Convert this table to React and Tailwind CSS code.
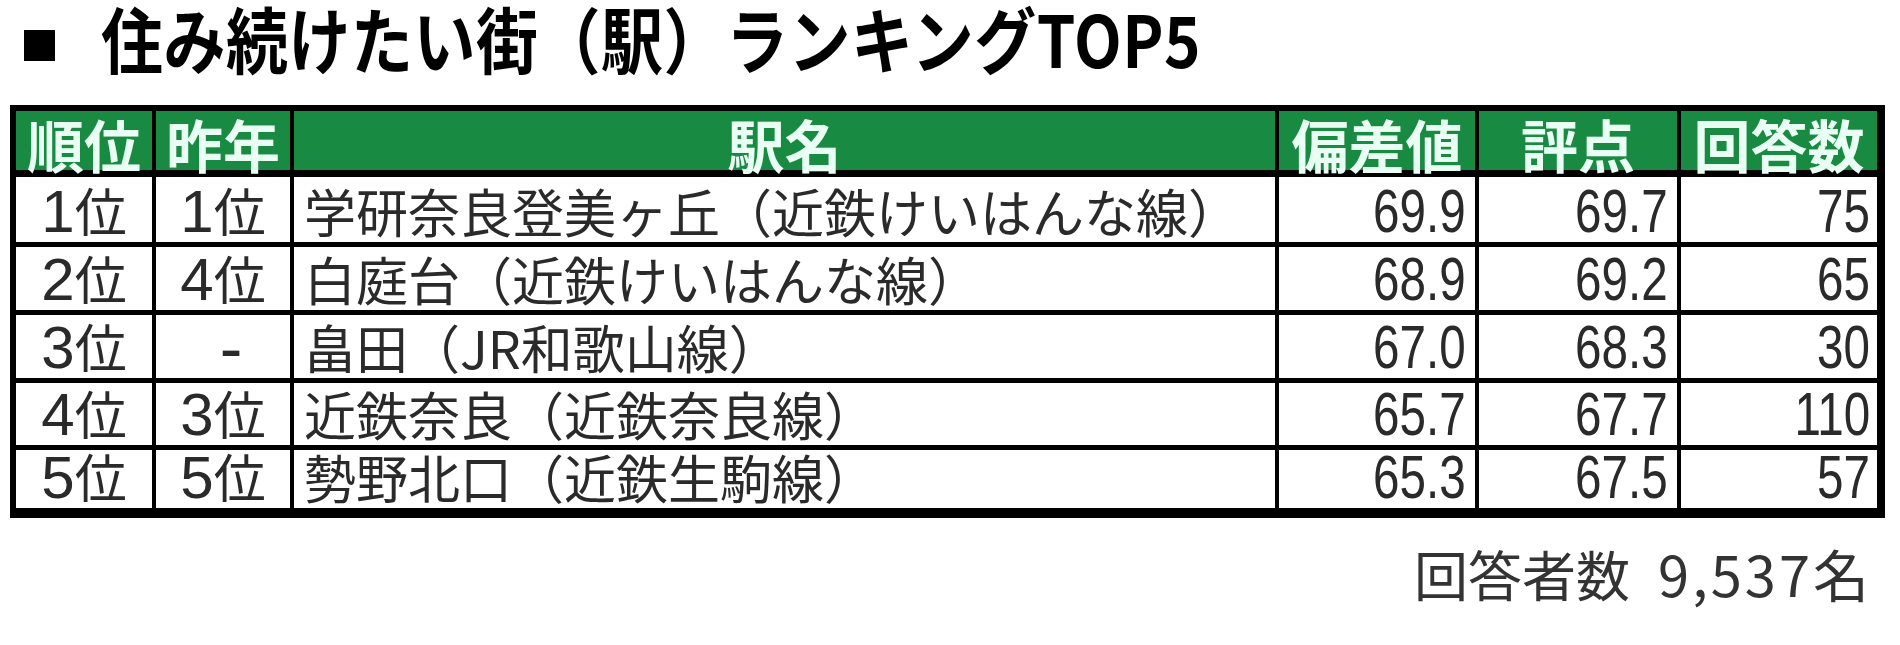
import React from "react";

const rows = [
  ["1", "1", "学研奈良登美ヶ丘（近鉄けいはんな線）", "69.9", "69.7", "75"],
  ["2", "4", "白庭台（近鉄けいはんな線）", "68.9", "69.2", "65"],
  ["3", null, "畠田（JR和歌山線）", "67.0", "68.3", "30"],
  ["4", "3", "近鉄奈良（近鉄奈良線）", "65.7", "67.7", "110"],
  ["5", "5", "勢野北口（近鉄生駒線）", "65.3", "67.5", "57"],
];

const jp = "font-['Noto_Sans_CJK_JP',sans-serif]";

function Rank({ n }) {
  if (!n) {
    return <span className="ml-[16px] font-['Liberation_Sans',sans-serif] text-[68px] leading-[60px]">-</span>;
  }
  return (
    <span className="whitespace-nowrap">
      <span className="font-['Liberation_Sans',sans-serif] text-[60px]">{n}</span>
      <span className={`${jp} text-[52px]`}>位</span>
    </span>
  );
}

function Num({ v }) {
  return (
    <span className="inline-block origin-right scale-x-[0.78] font-['Liberation_Sans',sans-serif] text-[61px]">
      {v}
    </span>
  );
}

function Head({ children }) {
  return (
    <div className={`flex items-end justify-center bg-[#188a42] ${jp} mb-[2px] text-[57px] font-bold leading-none text-[#eafff3]`}>
      <span className="translate-y-[2px]">{children}</span>
    </div>
  );
}

export default function App() {
  return (
    <div className="w-[1900px] h-[645px] bg-white text-[#2a2a2a]">
      <div className="flex items-start pl-[24px] pt-[6px] h-[68px]">
        <span className="mt-[24px] block w-[31px] h-[31px] bg-black" />
        <span className={`ml-[46px] inline-block scale-y-[1.15] ${jp} text-[62px] font-bold leading-none tracking-[0.5px] text-black whitespace-nowrap`}>
          住み続けたい街（駅）ランキングTOP5
        </span>
      </div>

      <div className="mt-[37px] ml-[10px] w-[1875px] bg-black pt-[6px] pl-[6px] pr-[8px] pb-[10px]">
        <div className="grid grid-cols-[136px_134px_981px_196px_198px_196px] grid-rows-[61px_65px_63px_63px_62px_58px] gap-x-[4px] gap-y-[5px]">
          <Head>順位</Head>
          <Head>昨年</Head>
          <Head>駅名</Head>
          <Head>偏差値</Head>
          <Head>評点</Head>
          <Head>回答数</Head>
          {rows.map((r, i) => (
            <React.Fragment key={i}>
              <div className="flex items-end justify-center bg-white leading-none">
                <Rank n={r[0]} />
              </div>
              <div className="flex items-end justify-center bg-white leading-none">
                <Rank n={r[1]} />
              </div>
              <div className={`flex items-end bg-white pl-[10px] pb-[5px] ${jp} text-[52px] leading-none whitespace-nowrap`}>
                {r[2]}
              </div>
              <div className="flex items-end justify-end bg-white pr-[9px] leading-none">
                <Num v={r[3]} />
              </div>
              <div className="flex items-end justify-end bg-white pr-[9px] leading-none">
                <Num v={r[4]} />
              </div>
              <div className="flex items-end justify-end bg-white pr-[7px] leading-none">
                <Num v={r[5]} />
              </div>
            </React.Fragment>
          ))}
        </div>
      </div>

      <div className={`mt-[27px] flex items-end justify-end pr-[28px] ${jp} leading-none text-[#333]`}>
        <span className="text-[54px]">回答者数</span>
        <span className="ml-[28px] text-[56px] tracking-[3px]">9,537名</span>
      </div>
    </div>
  );
}
